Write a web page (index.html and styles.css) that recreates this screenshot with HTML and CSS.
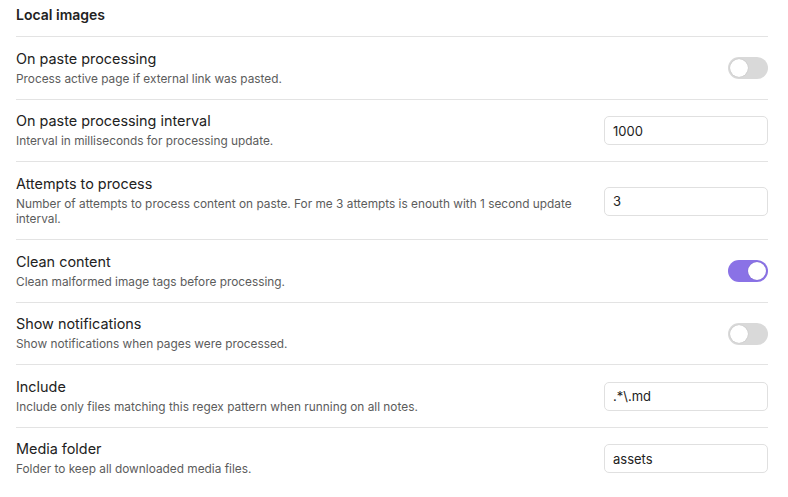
FILE: index.html
```html
<!DOCTYPE html>
<html>
<head>
<meta charset="utf-8">
<link rel="stylesheet" href="styles.css">
</head>
<body>
<div class="settings">
  <div class="heading">Local images</div>

  <div class="item">
    <div class="info">
      <div class="name">On paste processing</div>
      <div class="desc">Process active page if external link was pasted.</div>
    </div>
    <div class="control"><div class="toggle"><div class="knob"></div></div></div>
  </div>

  <div class="item">
    <div class="info">
      <div class="name">On paste processing interval</div>
      <div class="desc">Interval in milliseconds for processing update.</div>
    </div>
    <div class="control"><input class="text" type="text" value="1000"></div>
  </div>

  <div class="item">
    <div class="info">
      <div class="name">Attempts to process</div>
      <div class="desc">Number of attempts to process content on paste. For me 3 attempts is enouth with 1 second update interval.</div>
    </div>
    <div class="control"><input class="text" type="text" value="3"></div>
  </div>

  <div class="item">
    <div class="info">
      <div class="name">Clean content</div>
      <div class="desc">Clean malformed image tags before processing.</div>
    </div>
    <div class="control"><div class="toggle on"><div class="knob"></div></div></div>
  </div>

  <div class="item">
    <div class="info">
      <div class="name">Show notifications</div>
      <div class="desc">Show notifications when pages were processed.</div>
    </div>
    <div class="control"><div class="toggle"><div class="knob"></div></div></div>
  </div>

  <div class="item">
    <div class="info">
      <div class="name">Include</div>
      <div class="desc">Include only files matching this regex pattern when running on all notes.</div>
    </div>
    <div class="control"><input class="text" type="text" value=".*\.md"></div>
  </div>

  <div class="item">
    <div class="info">
      <div class="name">Media folder</div>
      <div class="desc">Folder to keep all downloaded media files.</div>
    </div>
    <div class="control"><input class="text" type="text" value="assets"></div>
  </div>
</div>
</body>
</html>
```

FILE: styles.css
```css
html, body {
  margin: 0;
  padding: 0;
  background: #ffffff;
}
body {
  font-family: Inter, "Noto Sans", "Liberation Sans", sans-serif;
  color: #222222;
}
.settings {
  padding: 0 20px 0 16px;
}
.heading {
  font-size: 14px;
  font-weight: 600;
  line-height: 20px;
  padding: 5px 0 11px;
  border-bottom: 1px solid #e3e3e3;
}
.item {
  display: flex;
  align-items: center;
  gap: 16px;
  padding: 12.5px 0 11.5px;
  border-bottom: 1px solid #e3e3e3;
}
.item:last-child {
  border-bottom: none;
}
.info {
  flex: 1 1 auto;
  min-width: 0;
}
.name {
  font-size: 14.4px;
  line-height: 17.5px;
  color: #222222;
}
.desc {
  font-size: 11.85px;
  line-height: 15.5px;
  padding-top: 4.5px;
  color: #5c5c5c;
}
.control {
  flex: 0 0 auto;
  display: flex;
  justify-content: flex-end;
}
.text {
  width: 164px;
  height: 29px;
  box-sizing: border-box;
  border: 1px solid #e0e0e0;
  border-radius: 5px;
  padding: 0 8px;
  font-family: Inter, "Noto Sans", "Liberation Sans", sans-serif;
  font-size: 13px;
  color: #222222;
  background: #ffffff;
  outline: none;
}
.toggle {
  width: 40px;
  height: 22px;
  border-radius: 11px;
  background: #d9d9d9;
  box-sizing: border-box;
  padding: 2px;
  display: flex;
}
.knob {
  width: 18px;
  height: 18px;
  border-radius: 50%;
  background: #ffffff;
  box-shadow: 0 0 1px rgba(0,0,0,0.25);
}
.toggle.on {
  background: #8a72e6;
  justify-content: flex-end;
}
```
